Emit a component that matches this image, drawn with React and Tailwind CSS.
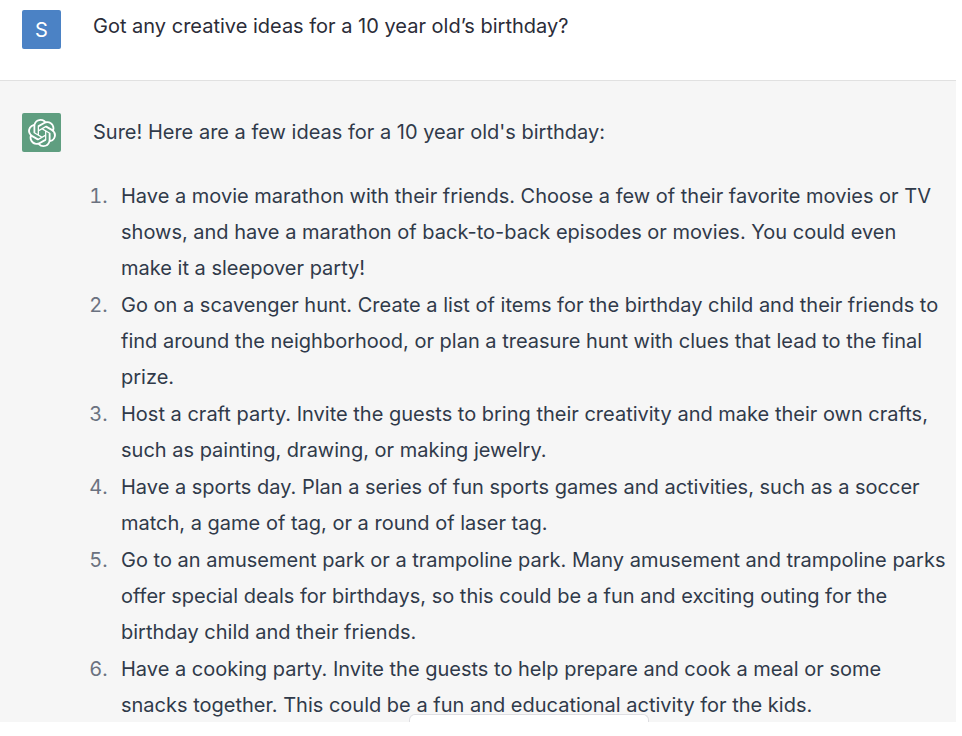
import { SiOpenai } from 'react-icons/si';

const ideas = [
  'Have a movie marathon with their friends. Choose a few of their favorite movies or TV shows, and have a marathon of back-to-back episodes or movies. You could even make it a sleepover party!',
  'Go on a scavenger hunt. Create a list of items for the birthday child and their friends to find around the neighborhood, or plan a treasure hunt with clues that lead to the final prize.',
  'Host a craft party. Invite the guests to bring their creativity and make their own crafts, such as painting, drawing, or making jewelry.',
  'Have a sports day. Plan a series of fun sports games and activities, such as a soccer match, a game of tag, or a round of laser tag.',
  'Go to an amusement park or a trampoline park. Many amusement and trampoline parks offer special deals for birthdays, so this could be a fun and exciting outing for the birthday child and their friends.',
  'Have a cooking party. Invite the guests to help prepare and cook a meal or some snacks together. This could be a fun and educational activity for the kids.',
];

export default function App() {
  return (
    <main className="mr-1.5 bg-white font-['Inter',sans-serif] text-[20px]">
      {/* User message */}
      <section className="flex gap-8 border-b border-[#e1e1e1] px-[22px] pt-2.5 pb-[31px] text-[#2b2c38]">
        <div className="flex size-[39px] shrink-0 items-center justify-center rounded-xs bg-[#4b82c5] text-white">S</div>
        <p className="leading-8">Got any creative ideas for a 10 year old’s birthday?</p>
      </section>

      {/* Assistant message */}
      <section className="relative flex gap-8 bg-[#f6f6f6] pt-8 pr-2 pl-[22px] text-[#303a4a]">
        <div className="flex size-[39px] shrink-0 items-center justify-center rounded-xs bg-[#5f9e80] text-white">
          <SiOpenai className="size-7" />
        </div>
        <div>
          <p className="leading-[38px]">Sure! Here are a few ideas for a 10 year old's birthday:</p>
          <ol className="mt-[27px] -mb-px list-decimal space-y-px pl-5 leading-9 marker:text-[#6b7280]">
            {ideas.map((idea) => (
              <li key={idea} className="pl-2">{idea}</li>
            ))}
          </ol>
        </div>
        {/* Top edge of the floating button */}
        <div className="absolute bottom-0 left-[409px] h-2 w-60 rounded-t-md border border-b-0 border-[#dedee2] bg-white"></div>
      </section>
    </main>
  );
}
